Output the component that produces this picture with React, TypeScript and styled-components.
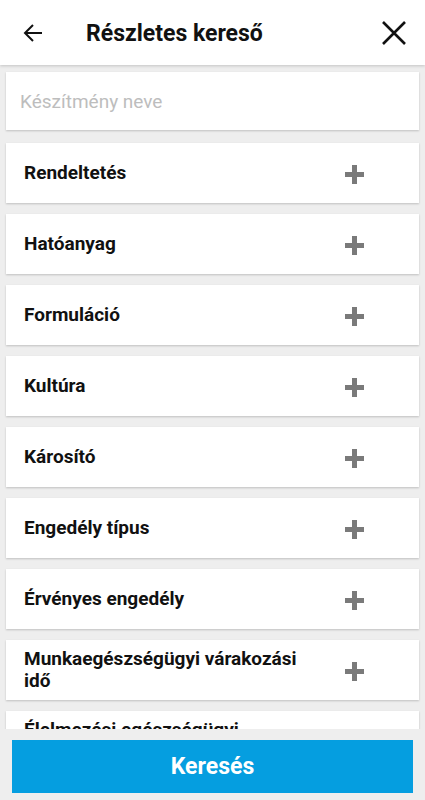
import React from 'react';
import styled, { createGlobalStyle } from 'styled-components';

const GlobalStyle = createGlobalStyle`
  html, body {
    margin: 0;
    padding: 0;
    background: #eeeeee;
    font-family: Roboto, "Noto Sans", Arial, sans-serif;
  }
`;

const Screen = styled.div`
  width: 425px;
  height: 800px;
  display: flex;
  flex-direction: column;
  background: #eeeeee;
  overflow: hidden;
`;

const Header = styled.header`
  height: 65px;
  flex-shrink: 0;
  display: flex;
  align-items: center;
  background: #ffffff;
  box-shadow: 0 1px 3px rgba(0, 0, 0, 0.18);
  position: relative;
  z-index: 2;
`;

const IconButton = styled.div<{ side: 'left' | 'right' }>`
  width: 42px;
  height: 42px;
  display: flex;
  align-items: center;
  justify-content: center;
  margin: ${({ side }) => (side === 'left' ? '0 0 0 12px' : '0 10px 0 auto')};
`;

const Title = styled.h1`
  margin: 2px 0 0 32px;
  font-size: 23px;
  font-weight: 700;
  color: #111111;
`;

const Content = styled.div`
  flex: 1;
  overflow: hidden;
  display: flex;
  flex-direction: column;
  gap: 11px;
  padding: 7px 6px 0;
`;

const Card = styled.div<{ search?: boolean }>`
  flex-shrink: 0;
  height: ${({ search }) => (search ? '58px' : '60px')};
  margin-bottom: ${({ search }) => (search ? '2px' : '0')};
  background: #ffffff;
  box-shadow: 0 1px 2px rgba(0, 0, 0, 0.2);
  display: flex;
  align-items: center;
  box-sizing: border-box;
  overflow: hidden;
`;

const SearchInput = styled.div`
  padding-left: 14px;
  font-size: 19px;
  color: #bdbdbd;
`;

const Label = styled.div`
  padding-left: 18px;
  font-size: 19px;
  font-weight: 700;
  color: #111111;
  line-height: 22px;
  max-width: 285px;
`;

const PlusWrap = styled.div`
  width: 20px;
  height: 20px;
  margin: 3px 55px 0 auto;
  flex-shrink: 0;
  display: flex;
  align-items: center;
  justify-content: center;
`;

const Footer = styled.div`
  flex-shrink: 0;
  height: 71px;
  background: #eeeeee;
  padding: 11px 12px 7px;
  box-sizing: border-box;
  position: relative;
  z-index: 2;
`;

const SearchButton = styled.button`
  width: 100%;
  height: 53px;
  border: none;
  background: #059ee0;
  color: #ffffff;
  font-family: Roboto, "Noto Sans", Arial, sans-serif;
  font-size: 23px;
  font-weight: 700;
  display: flex;
  align-items: center;
  justify-content: center;
`;

const Plus = () => (
  <svg width="19" height="19" viewBox="0 0 19 19">
    <rect x="7" y="0" width="5" height="19" fill="#7a7a7a" />
    <rect x="0" y="7" width="19" height="5" fill="#7a7a7a" />
  </svg>
);

const filters = [
  'Rendeltetés',
  'Hatóanyag',
  'Formuláció',
  'Kultúra',
  'Károsító',
  'Engedély típus',
  'Érvényes engedély',
  'Munkaegészségügyi várakozási idő',
  'Élelmezési egészségügyi várakozási idő',
];

const App = () => (
  <Screen>
    <GlobalStyle />
    <Header>
      <IconButton side="left">
        <svg width="20" height="20" viewBox="0 0 20 20">
          <path d="M19 10H2M10 2L2 10L10 18" stroke="#111" strokeWidth="2" fill="none" />
        </svg>
      </IconButton>
      <Title>Részletes kereső</Title>
      <IconButton side="right">
        <svg width="24" height="24" viewBox="0 0 24 24">
          <path d="M1 1L23 23M23 1L1 23" stroke="#111" strokeWidth="2.6" fill="none" />
        </svg>
      </IconButton>
    </Header>
    <Content>
      <Card search>
        <SearchInput>Készítmény neve</SearchInput>
      </Card>
      {filters.map((f) => (
        <Card key={f}>
          <Label>{f}</Label>
          <PlusWrap>
            <Plus />
          </PlusWrap>
        </Card>
      ))}
    </Content>
    <Footer>
      <SearchButton>Keresés</SearchButton>
    </Footer>
  </Screen>
);

export default App;
